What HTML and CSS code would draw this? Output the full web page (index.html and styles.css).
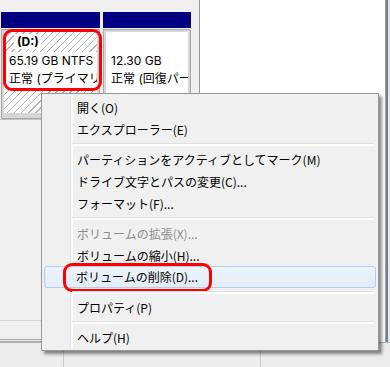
FILE: index.html
```html
<!DOCTYPE html>
<html lang="ja">
<head>
<meta charset="utf-8">
<title>ディスクの管理</title>
<link rel="stylesheet" href="styles.css">
</head>
<body>
<div class="screen">
  <div class="main">
    <div class="map">
      <div class="disk">
        <div class="part part-d">
          <div class="bar"></div>
          <div class="body">
            <div class="inner hatch">
              <div class="line name"><span>(D:)</span></div>
              <div class="line fill">65.19 GB NTFS</div>
              <div class="line fill">正常 (プライマリ パーティション)</div>
            </div>
          </div>
          <div class="mark mark-d"></div>
        </div>
        <div class="part part-r">
          <div class="bar"></div>
          <div class="body">
            <div class="inner">
              <div class="line"></div>
              <div class="line">12.30 GB</div>
              <div class="line">正常 (回復パーティション)</div>
            </div>
          </div>
        </div>
      </div>
      <div class="spacer"></div>
      <div class="rowline"></div>
    </div>
    <div class="blank"></div>
    <div class="frame"></div>
  </div>
  <div class="status">
    <div class="cell c1"></div>
    <div class="cell c2"></div>
    <div class="cell c3"></div>
  </div>

  <ul class="menu">
    <li class="item">開く(O)</li>
    <li class="item">エクスプローラー(E)</li>
    <li class="sep"></li>
    <li class="item">パーティションをアクティブとしてマーク(M)</li>
    <li class="item">ドライブ文字とパスの変更(C)...</li>
    <li class="item">フォーマット(F)...</li>
    <li class="sep"></li>
    <li class="item disabled">ボリュームの拡張(X)...</li>
    <li class="item">ボリュームの縮小(H)...</li>
    <li class="item hover">ボリュームの削除(D)...<span class="mark mark-del"></span></li>
    <li class="sep"></li>
    <li class="item">プロパティ(P)</li>
    <li class="sep"></li>
    <li class="item">ヘルプ(H)</li>
  </ul>
</div>
</body>
</html>
```

FILE: styles.css
```css
* {
  box-sizing: border-box;
  margin: 0;
  padding: 0;
}

html,
body {
  width: 390px;
  height: 367px;
  overflow: hidden;
}

body {
  background: #f0f0f0;
  font-family: "Noto Sans CJK JP", "Noto Sans", sans-serif;
  font-size: 12px;
  color: #000;
}

.screen {
  position: relative;
  width: 390px;
  height: 367px;
  display: flex;
  flex-direction: column;
}

.main {
  display: flex;
  height: 342px;
}

/* left graphical pane */
.map {
  width: 200px;
  display: flex;
  flex-direction: column;
  background: #f0f0f0;
  border-right: 1px solid #9a9a9a;
}

.disk {
  display: flex;
  gap: 3px;
  height: 120px;
  padding: 12px 0 0 1px;
  border-bottom: 1px solid #c4c4c4;
}

.part {
  position: relative;
  display: flex;
  flex-direction: column;
}

.part-d {
  width: 99px;
}

.part-r {
  width: 88px;
}

.bar {
  height: 16px;
  background: #000080;
}

.body {
  margin-top: 1px;
  height: 90px;
  border: 1px solid #a8a8a8;
  padding: 2px 2px 5px 2px;
  background: #d6d6d6;
}

.inner {
  height: 100%;
  background: #fff;
  overflow: hidden;
  padding-top: 1px;
  line-height: 18.5px;
  font-family: Inter, "Noto Sans CJK JP", sans-serif;
}

.hatch {
  background: repeating-linear-gradient(135deg, #fff 0 4px, #b4b4b4 4px 5px);
}

.line {
  height: 18.5px;
  white-space: nowrap;
  padding-left: 5px;
}

.name {
  padding-left: 10px;
}

.name span {
  background: #fff;
  font-weight: bold;
  padding: 0 2px 0 3px;
}

.fill {
  background: #fff;
}

.spacer {
  flex: 1;
}

.rowline {
  height: 22px;
  border-top: 1px solid #d4d4d4;
  border-bottom: 3px double #a4a4a4;
}

.blank {
  width: 185px;
  background: #fff;
}

.frame {
  width: 5px;
  border-left: 1px solid #a0a0a0;
  border-right: 2px solid #dfe5ec;
  background: #6f839b;
}

.status {
  flex: 1;
  display: flex;
  border-top: 1px solid #b4b4b4;
  background: #ececec;
}

.cell {
  border-right: 1px solid #c8c8c8;
}

.c1 {
  width: 64px;
}

.c2 {
  width: 197px;
}

.c3 {
  flex: 1;
  border-right: 0;
}

/* red annotation rectangles */
.mark {
  position: absolute;
  border: 3px solid #f00;
  border-radius: 9px;
  pointer-events: none;
}

.mark-d {
  left: 2px;
  top: 17px;
  width: 99px;
  height: 62px;
}

/* context menu */
.menu {
  position: absolute;
  left: 41px;
  top: 93px;
  width: 338px;
  height: 258px;
  list-style: none;
  padding: 2px;
  background: #f0f0f0;
  border: 1px solid #979797;
  box-shadow: 3px 3px 3px rgba(0, 0, 0, 0.45);
  font-size: 12px;
}

.menu::before {
  content: "";
  position: absolute;
  top: 2px;
  bottom: 2px;
  left: 28px;
  width: 2px;
  border-left: 1px solid #e2e3e3;
  background: #fff;
}

.item {
  position: relative;
  height: 22px;
  line-height: 22px;
  padding-left: 32px;
  white-space: nowrap;
  border: 1px solid transparent;
  border-radius: 3px;
}

.item.disabled {
  color: #8d8d8d;
}

.item.hover {
  border-color: #b2cdee;
  background: linear-gradient(#eef3fa, #e3ecf8);
  line-height: 20px;
  padding-left: 31px;
}

.mark-del {
  left: 18px;
  top: -4px;
  width: 149px;
  height: 29px;
}

.sep {
  position: relative;
  height: 8px;
  margin-left: 28px;
  margin-right: 2px;
}

.sep::before {
  content: "";
  position: absolute;
  left: 0;
  right: 0;
  top: 3px;
  height: 2px;
  border-top: 1px solid #e0e0e0;
  background: #fff;
}
```
